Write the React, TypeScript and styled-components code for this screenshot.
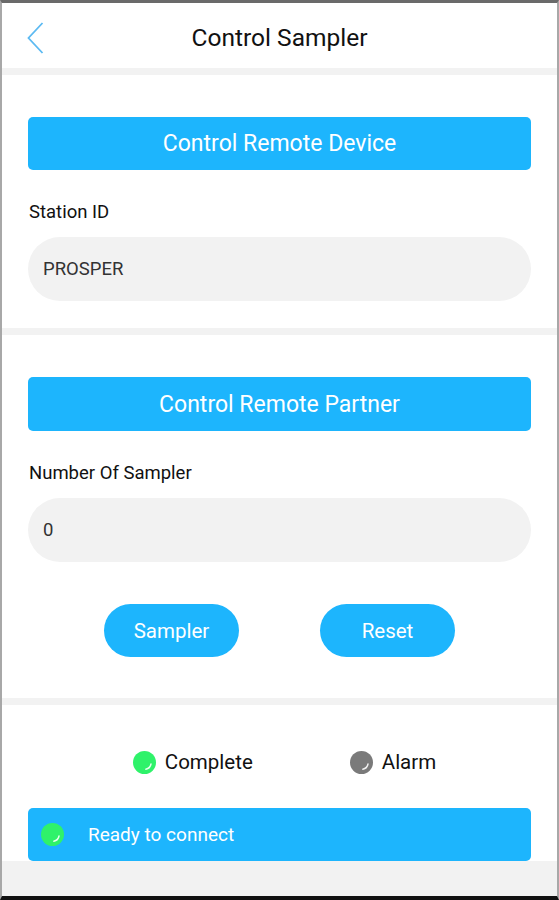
import styled, { createGlobalStyle } from "styled-components";

const BLUE = "#1db5fd";
const GREEN = "#2ff26a";

const Global = createGlobalStyle`
  html, body { margin: 0; padding: 0; background: #fff; }
  body { font-family: Roboto, "Noto Sans", sans-serif; }
  * { box-sizing: border-box; }
`;

const Dot = ({ color }: { color: string }) => (
  <svg width="23" height="23" viewBox="0 0 23 23">
    <circle cx="11.5" cy="11.5" r="11.5" fill={color} />
    <path d="M18 13 Q17.2 17.4 12.8 18.2" stroke="#fff" strokeWidth="1.4" fill="none" strokeLinecap="round" opacity="0.9" />
  </svg>
);

const App = () => {
  return (
    <>
      <Global />
      <Frame>
        <Header>
          <Back>
            <svg width="17" height="32" viewBox="0 0 17 32">
              <path d="M15.5 1 L1.5 16 L15.5 31" stroke="#5cbaf2" strokeWidth="1.8" fill="none" />
            </svg>
          </Back>
          <Title>Control Sampler</Title>
        </Header>
        <Divider />
        <Section $bottom={27}>
          <BlueBar>Control Remote Device</BlueBar>
          <Label>Station ID</Label>
          <Field>PROSPER</Field>
        </Section>
        <Divider />
        <Section $bottom={41}>
          <BlueBar $tall>Control Remote Partner</BlueBar>
          <Label>Number Of Sampler</Label>
          <Field>0</Field>
          <ButtonRow>
            <Pill>Sampler</Pill>
            <Pill>Reset</Pill>
          </ButtonRow>
        </Section>
        <Divider />
        <StatusSection>
          <StatusRow>
            <Status>
              <Dot color={GREEN} />
              <span>Complete</span>
            </Status>
            <Status>
              <Dot color="#7a7a7a" />
              <span>Alarm</span>
            </Status>
          </StatusRow>
          <ConnectBar>
            <Dot color={GREEN} />
            <span>Ready to connect</span>
          </ConnectBar>
        </StatusSection>
        <Footer />
      </Frame>
    </>
  );
};

export default App;

const Frame = styled.div`
  width: 559px;
  height: 900px;
  display: flex;
  flex-direction: column;
  border-top: 3px solid #6a6a6a;
  border-left: 2px solid #a8a8a8;
  border-right: 2px solid #a8a8a8;
  border-bottom: 4px solid #111;
  background: #fff;
  overflow: hidden;
`;

const Header = styled.div`
  height: 65px;
  display: flex;
  align-items: center;
  justify-content: center;
  position: relative;
`;

const Back = styled.div`
  position: absolute;
  left: 25px;
  top: 19px;
  display: flex;
`;

const Title = styled.h1`
  margin: 0;
  font-size: 24.5px;
  font-weight: 400;
  color: #111;
  padding-top: 4px;
`;

const Divider = styled.div`
  height: 7px;
  background: #f2f2f2;
`;

const Section = styled.div<{ $bottom: number }>`
  display: flex;
  flex-direction: column;
  padding: 42px 26px ${(p) => p.$bottom}px 26px;
`;

const BlueBar = styled.div<{ $tall?: boolean }>`
  height: ${(p) => (p.$tall ? 54 : 53)}px;
  background: ${BLUE};
  border-radius: 5px;
  color: #fff;
  font-size: 23px;
  display: flex;
  align-items: center;
  justify-content: center;
`;

const Label = styled.div`
  margin-top: 31px;
  font-size: 18.5px;
  line-height: 22px;
  color: #111;
  padding-left: 1px;
`;

const Field = styled.div`
  margin-top: 14px;
  height: 64px;
  border-radius: 32px;
  background: #f2f2f2;
  display: flex;
  align-items: center;
  padding-left: 15px;
  font-size: 18.5px;
  color: #333;
`;

const ButtonRow = styled.div`
  margin-top: 42px;
  display: flex;
  justify-content: center;
  gap: 81px;
`;

const Pill = styled.div`
  width: 135px;
  height: 53px;
  border-radius: 27px;
  background: ${BLUE};
  color: #fff;
  font-size: 20.5px;
  display: flex;
  align-items: center;
  justify-content: center;
`;

const StatusSection = styled.div`
  display: flex;
  flex-direction: column;
  padding: 45px 26px 0 26px;
`;

const StatusRow = styled.div`
  display: flex;
  justify-content: center;
  align-items: center;
  gap: 97px;
  padding-left: 10px;
`;

const Status = styled.div`
  display: flex;
  align-items: center;
  gap: 9px;
  font-size: 20.5px;
  line-height: 24px;
  color: #111;
`;

const ConnectBar = styled.div`
  margin-top: 34px;
  height: 53px;
  background: ${BLUE};
  border-radius: 5px;
  display: flex;
  align-items: center;
  padding-left: 13px;
  gap: 24px;
  color: #fff;
  font-size: 19px;
`;

const Footer = styled.div`
  flex: 1;
  background: #f2f2f2;
`;
